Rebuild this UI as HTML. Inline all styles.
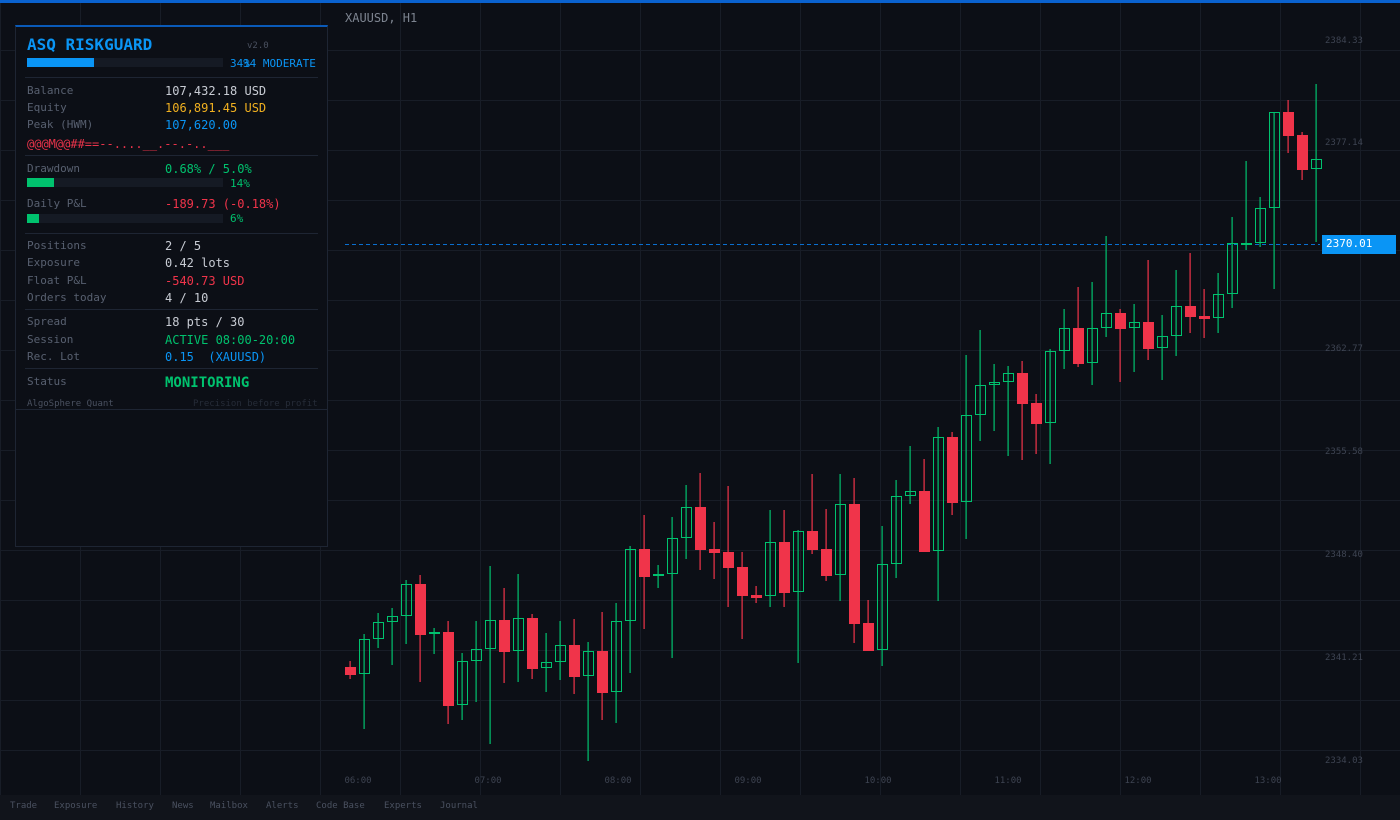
<!DOCTYPE html>
<html><head><meta charset="utf-8"><style>
*{margin:0;padding:0;box-sizing:border-box}
body{width:1400px;height:820px;overflow:hidden;background:#0c0f16;font-family:"DejaVu Sans Mono","Liberation Mono",monospace;position:relative}
.t{position:absolute;white-space:pre;line-height:14px}
.l{color:#586070;font-size:11px}
.v{color:#c8ccd4;font-size:12px}
.tb{position:absolute;top:799px;font-size:9px;color:#4a5160;white-space:pre;line-height:14px}
</style></head><body>
<svg width="1400" height="820" style="position:absolute;left:0;top:0" id="s"></svg>
<div style="position:absolute;left:0;top:0;width:1400px;height:3px;background:#0a62cf"></div>
<div class="t" style="left:345px;top:11px;font-size:12px;color:#7d8490">XAUUSD, H1</div>
<div style="position:absolute;left:0;top:795px;width:1400px;height:25px;background:#11141b"></div>
<div class="tb" style="left:10px">Trade</div><div class="tb" style="left:54px">Exposure</div><div class="tb" style="left:116px">History</div><div class="tb" style="left:172px">News</div><div class="tb" style="left:210px">Mailbox</div><div class="tb" style="left:266px">Alerts</div><div class="tb" style="left:316px">Code Base</div><div class="tb" style="left:384px">Experts</div><div class="tb" style="left:440px">Journal</div>

<div style="position:absolute;left:15px;top:25px;width:313px;height:522px;background:#0c0f16;border:1px solid #1e2533;border-top:2px solid #0a5ab8"></div>
<div style="position:absolute;left:16px;top:409px;width:311px;height:1px;background:#1e2533"></div>
<div class="t" style="left:27px;top:37px;font-size:16px;font-weight:bold;color:#0a95f5;line-height:16px">ASQ RISKGUARD</div>
<div class="t" style="left:247px;top:39px;font-size:9px;color:#4a5160">v2.0</div>
<div style="position:absolute;left:27px;top:58px;width:196px;height:9px;background:#151a24"></div>
<div style="position:absolute;left:27px;top:58px;width:67px;height:9px;background:#0a95f5"></div>
<div class="t" style="left:230px;top:57px;font-size:11px;color:#0a95f5">34%</div>
<div class="t" style="left:243px;top:57px;font-size:11px;color:#0a95f5">34 MODERATE</div>
<div style="position:absolute;left:25px;top:77px;width:293px;height:1px;background:#1e2533"></div>
<div class="t l" style="left:27px;top:84px">Balance</div><div class="t v" style="left:165px;top:84px">107,432.18 USD</div>
<div class="t l" style="left:27px;top:101px">Equity</div><div class="t v" style="left:165px;top:101px;color:#f0b020">106,891.45 USD</div>
<div class="t l" style="left:27px;top:118px">Peak (HWM)</div><div class="t v" style="left:165px;top:118px;color:#0a95f5">107,620.00</div>
<div class="t" style="left:27px;top:137px;font-size:12px;color:#e8334a">@@@M@@##==--....__.--.-..___</div>
<div style="position:absolute;left:25px;top:155px;width:293px;height:1px;background:#1e2533"></div>
<div class="t l" style="left:27px;top:162px">Drawdown</div><div class="t v" style="left:165px;top:162px;color:#00c26e">0.68% / 5.0%</div>
<div style="position:absolute;left:27px;top:178px;width:196px;height:9px;background:#151a24"></div>
<div style="position:absolute;left:27px;top:178px;width:27px;height:9px;background:#00c26e"></div>
<div class="t" style="left:230px;top:177px;font-size:11px;color:#00c26e">14%</div>
<div class="t l" style="left:27px;top:197px">Daily P&amp;L</div><div class="t v" style="left:165px;top:197px;color:#f0344a">-189.73 (-0.18%)</div>
<div style="position:absolute;left:27px;top:214px;width:196px;height:9px;background:#151a24"></div>
<div style="position:absolute;left:27px;top:214px;width:12px;height:9px;background:#00c26e"></div>
<div class="t" style="left:230px;top:212px;font-size:11px;color:#00c26e">6%</div>
<div style="position:absolute;left:25px;top:233px;width:293px;height:1px;background:#1e2533"></div>
<div class="t l" style="left:27px;top:239px">Positions</div><div class="t v" style="left:165px;top:239px">2 / 5</div>
<div class="t l" style="left:27px;top:256px">Exposure</div><div class="t v" style="left:165px;top:256px">0.42 lots</div>
<div class="t l" style="left:27px;top:274px">Float P&amp;L</div><div class="t v" style="left:165px;top:274px;color:#f0344a">-540.73 USD</div>
<div class="t l" style="left:27px;top:291px">Orders today</div><div class="t v" style="left:165px;top:291px">4 / 10</div>
<div style="position:absolute;left:25px;top:309px;width:293px;height:1px;background:#1e2533"></div>
<div class="t l" style="left:27px;top:315px">Spread</div><div class="t v" style="left:165px;top:315px">18 pts / 30</div>
<div class="t l" style="left:27px;top:333px">Session</div><div class="t v" style="left:165px;top:333px;color:#00c26e">ACTIVE 08:00-20:00</div>
<div class="t l" style="left:27px;top:350px">Rec. Lot</div><div class="t v" style="left:165px;top:350px;color:#0a95f5">0.15  (XAUUSD)</div>
<div style="position:absolute;left:25px;top:368px;width:293px;height:1px;background:#1e2533"></div>
<div class="t l" style="left:27px;top:375px">Status</div>
<div class="t" style="left:165px;top:375px;font-size:14px;font-weight:bold;color:#00c26e;line-height:16px">MONITORING</div>
<div class="t" style="left:27px;top:397px;font-size:9px;color:#4a5160">AlgoSphere Quant</div>
<div class="t" style="left:193px;top:397px;font-size:9px;color:#262c38">Precision before profit</div>

<div style="position:absolute;left:1322px;top:235px;width:74px;height:19px;background:#0a95f5"></div>
<div class="t" style="left:1326px;top:237px;font-size:11px;color:#fff">2370.01</div>

<script>
var s=document.getElementById('s'),h='';
for(var x=0;x<=1400;x+=80)h+='<rect x="'+x+'" y="3" width="1" height="792" fill="#181d27"/>';
for(var y=50;y<=750;y+=50)h+='<rect x="0" y="'+y+'" width="1400" height="1" fill="#181d27"/>';
h+='<line x1="345" y1="244.5" x2="1320" y2="244.5" stroke="#0a6fd0" stroke-dasharray="4,3"/>';
var ax=[[40,'2384.33'],[142,'2377.14'],[348,'2362.77'],[451,'2355.58'],[554,'2348.40'],[657,'2341.21'],[760,'2334.03']];
ax.forEach(function(a){h+='<text x="1325" y="'+(a[0]+3)+'" font-size="9" fill="#3e4452" font-family="DejaVu Sans Mono,monospace">'+a[1]+'</text>';});
['06:00','07:00','08:00','09:00','10:00','11:00','12:00','13:00'].forEach(function(t,i){h+='<text x="'+(358+130*i)+'" y="783" text-anchor="middle" font-size="9" fill="#3e4452" font-family="DejaVu Sans Mono,monospace">'+t+'</text>';});
var c=[
[0,667,675,661,679],[1,639,674,634,729],[1,622,639,613,648],[1,616,622,608,665],[1,584,616,580,644],[0,584,635,575,682],[1,632,634,628,654],[0,632,706,621,724],[1,661,705,653,720],[1,649,661,621,702],
[1,620,649,566,744],[0,620,652,588,683],[1,618,651,574,682],[0,618,669,614,679],[1,662,668,633,692],[1,645,662,621,680],[0,645,677,619,694],[1,651,676,642,761],[0,651,693,612,720],[1,621,692,603,723],
[1,549,621,546,673],[0,549,577,515,629],[1,574,576,565,588],[1,538,574,517,658],[1,507,538,485,559],[0,507,550,473,570],[0,549,553,522,579],[0,552,568,486,607],[0,567,596,552,639],[0,595,598,586,603],
[1,542,596,510,607],[0,542,593,510,607],[1,531,592,530,663],[0,531,550,474,554],[0,549,576,509,581],[1,504,575,474,601],[0,504,624,478,643],[0,623,651,600,651],[1,564,650,526,666],[1,496,564,480,578],
[1,491,496,446,504],[0,491,552,459,552],[1,437,551,427,601],[0,437,503,432,515],[1,415,502,355,539],[1,385,415,330,441],[1,382,385,364,431],[1,373,382,366,456],[0,373,404,361,460],[0,403,424,394,454],
[1,351,423,349,464],[1,328,351,309,369],[0,328,364,287,367],[1,328,363,282,385],[1,313,328,236,337],[0,313,329,309,382],[1,322,328,304,372],[0,322,349,260,360],[1,336,348,315,380],[1,306,336,270,356],
[0,306,317,253,333],[0,316,319,289,338],[1,294,318,273,333],[1,243,294,217,308],[1,243,245,161,250],[1,208,243,197,247],[1,112,208,112,289],[0,112,136,100,153],[0,135,170,132,180],[1,159,169,84,242]];
c.forEach(function(d,i){var cx=350+14*i,col=d[0]?'#00c26e':'#f0344a';
h+='<rect x="'+(cx-0.5)+'" y="'+d[3]+'" width="1.2" height="'+(d[4]-d[3])+'" fill="'+col+'"/>';
var bh=Math.max(d[2]-d[1],2);
if(d[0])h+='<rect x="'+(cx-4.5)+'" y="'+(d[1]+0.5)+'" width="10" height="'+(bh-1)+'" fill="none" stroke="'+col+'" stroke-width="1"/>';
else h+='<rect x="'+(cx-5)+'" y="'+d[1]+'" width="11" height="'+bh+'" fill="'+col+'"/>';});
s.innerHTML=h;
</script>
</body></html>
